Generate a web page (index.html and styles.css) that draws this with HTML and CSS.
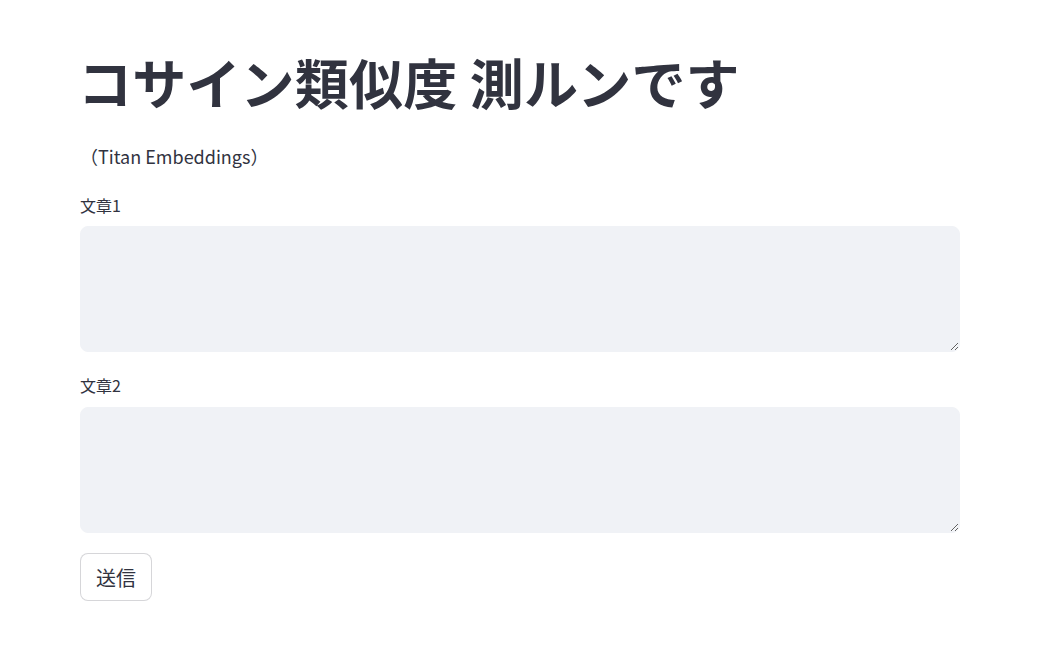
FILE: index.html
```html
<!DOCTYPE html>
<html lang="ja">
<head>
<meta charset="utf-8">
<link rel="stylesheet" href="styles.css">
</head>
<body>
<main class="main">
  <h1 class="title">コサイン類似度 測ルンです</h1>
  <p class="subtitle">（Titan Embeddings）</p>
  <div class="field">
    <label class="label" for="t1">文章1</label>
    <textarea id="t1" class="area"></textarea>
  </div>
  <div class="field">
    <label class="label" for="t2">文章2</label>
    <textarea id="t2" class="area"></textarea>
  </div>
  <button class="btn" type="button">送信</button>
</main>
</body>
</html>
```

FILE: styles.css
```css
html, body {
  margin: 0;
  padding: 0;
  background: #ffffff;
}
body {
  font-family: "Noto Sans CJK JP", "Noto Sans", sans-serif;
  color: rgb(49, 51, 63);
}
.main {
  width: 880px;
  padding: 49px 80px 40px;
  display: flex;
  flex-direction: column;
}
.title {
  margin: 0 0 0 -2px;
  font-size: 54px;
  line-height: 65px;
  font-weight: 700;
  letter-spacing: 0.2px;
}
.subtitle {
  margin: 29px 0 0;
  font-size: 18px;
  line-height: 27px;
}
.field {
  display: flex;
  flex-direction: column;
  margin-top: 23px;
}
.field + .field {
  margin-top: 21px;
}
.label {
  font-size: 16px;
  line-height: 24px;
  margin-bottom: 9px;
}
.field + .field .label {
  margin-bottom: 10px;
}
.area {
  box-sizing: border-box;
  width: 880px;
  height: 126px;
  background: rgb(240, 242, 246);
  border: 1px solid rgb(240, 242, 246);
  border-radius: 8px;
  resize: vertical;
  padding: 16px;
  font: inherit;
  outline: none;
}
.btn {
  align-self: flex-start;
  margin-top: 20px;
  height: 48px;
  width: 72px;
  padding: 0;
  background: #fff;
  border: 1px solid rgba(49, 51, 63, 0.2);
  border-radius: 8px;
  font-family: inherit;
  font-size: 20px;
  color: rgb(49, 51, 63);
}
```
